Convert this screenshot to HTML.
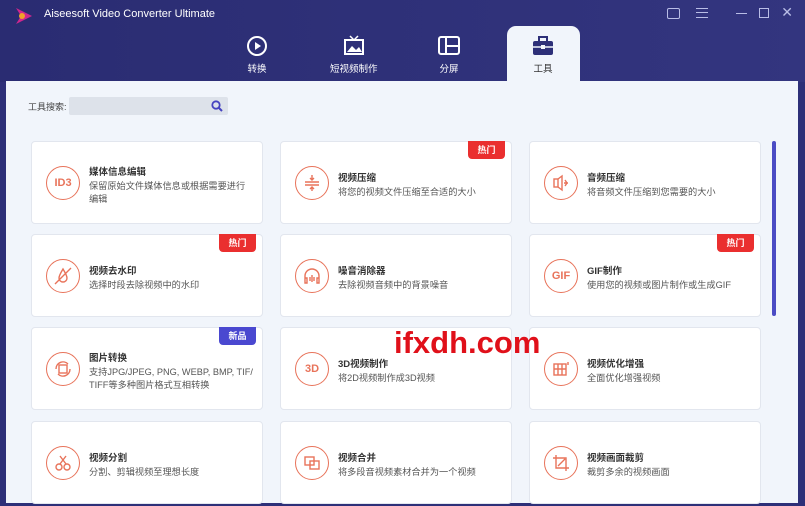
<!DOCTYPE html>
<html><head><meta charset="utf-8"><style>
*{margin:0;padding:0;box-sizing:border-box}
body{width:805px;height:506px;overflow:hidden;background:#2d2f78;font-family:"Liberation Sans","Noto Sans CJK SC",sans-serif;position:relative}
.hdr{position:absolute;left:0;top:0;width:805px;height:82px;background:linear-gradient(90deg,#2a2c72,#33357f)}
.title{position:absolute;left:44px;top:8px;color:#fff;font-size:11px}
.tab{position:absolute;top:35px;color:#fff;font-size:9.5px;text-align:center}
.content{position:absolute;left:6px;top:81px;width:792px;height:422px;background:#f1f5fb}
.active{position:absolute;left:507px;top:26px;width:73px;height:60px;background:#f1f5fb;border-radius:9px 9px 0 0}
.card{position:absolute;width:232px;height:83px;background:#fff;border:1px solid #e2e6ee;border-radius:4px}
.ic{position:absolute;left:14px;top:24px;width:34px;height:34px;border:1.6px solid #e8735a;border-radius:50%;color:#e8735a;font-size:11px;font-weight:bold;display:flex;align-items:center;justify-content:center}
.t{position:absolute;left:57px;font-size:9.5px;font-weight:bold;color:#333}
.d{position:absolute;left:57px;font-size:9.2px;color:#555;line-height:13px;width:172px;white-space:nowrap}
.badge{position:absolute;right:6px;top:-1px;width:37px;height:18px;background:#ea2f2f;color:#fff;font-size:9px;font-weight:bold;text-align:center;line-height:18px;border-radius:0 0 4px 4px}
.new{background:#4a48d0}
</style></head><body>
<div class="hdr"></div>
<svg style="position:absolute;left:13px;top:6px" width="22" height="20"><path d="M3 2 L19 10 L3 18 L8 10Z" fill="#d0268e"/><circle cx="9" cy="10" r="3" fill="#f2a12a"/></svg>
<div class="title">Aiseesoft Video Converter Ultimate</div>
<div style="position:absolute;right:125px;top:8px;width:13px;height:11px;border:1.3px solid #b9bde6;border-radius:2px"></div>
<div style="position:absolute;right:97px;top:8px;width:12px;height:10px;border-top:1.3px solid #b9bde6;border-bottom:1.3px solid #b9bde6"><div style="margin-top:3px;border-top:1.3px solid #b9bde6"></div></div>
<div style="position:absolute;right:58px;top:13px;width:11px;border-top:1.3px solid #b9bde6"></div>
<div style="position:absolute;right:36px;top:8px;width:10px;height:10px;border:1.3px solid #b9bde6"></div>
<div style="position:absolute;right:12px;top:4px;color:#b9bde6;font-size:14px">✕</div>
<div class="active"></div>
<div class="tab" style="left:246px"><svg width="22" height="22" style="display:block;margin:0 auto 4px"><circle cx="11" cy="11" r="9" fill="none" stroke="#fff" stroke-width="2"/><path d="M9 7 L15 11 L9 15Z" fill="#fff"/></svg>转换</div>
<div class="tab" style="left:330px"><svg width="22" height="22" style="display:block;margin:0 auto 4px"><rect x="2" y="5" width="18" height="14" fill="none" stroke="#fff" stroke-width="2"/><path d="M4 17 L9 11 L13 15 L16 12 L19 17Z" fill="#fff"/><path d="M7 1 L11 5 L15 1" stroke="#fff" fill="none" stroke-width="1.5"/></svg>短视频制作</div>
<div class="tab" style="left:438px"><svg width="22" height="22" style="display:block;margin:0 auto 4px"><rect x="1" y="2" width="20" height="17" rx="2" fill="none" stroke="#fff" stroke-width="2"/><path d="M8 2 V19 M8 11 H21" stroke="#fff" stroke-width="2"/></svg>分屏</div>
<div class="tab" style="left:532px;color:#333"><svg width="22" height="22" style="display:block;margin:0 auto 4px"><rect x="1" y="6" width="20" height="14" rx="2" fill="#2d2f78"/><rect x="7" y="2" width="8" height="5" fill="none" stroke="#2d2f78" stroke-width="2"/><path d="M1 12 H21" stroke="#f1f5fb" stroke-width="1.5"/><rect x="9" y="10" width="4" height="4" fill="#f1f5fb"/></svg>工具</div>
<div class="content"></div>
<div style="position:absolute;left:28px;top:100px;font-size:9px;color:#444">工具搜索:</div>
<div style="position:absolute;left:69px;top:97px;width:159px;height:18px;background:#dde2ea;border-radius:2px"><svg style="position:absolute;right:5px;top:3px" width="12" height="12"><circle cx="5" cy="5" r="3.7" fill="none" stroke="#4643c0" stroke-width="1.8"/><path d="M8 8 L11 11" stroke="#4643c0" stroke-width="2"/></svg></div>
<div style="position:absolute;left:772px;top:141px;width:4px;height:175px;background:#4b4cc4;border-radius:2px"></div>

<div class="card" style="left:31px;top:141px"><div class="ic">ID3</div><div class="t" style="top:22px">媒体信息编辑</div><div class="d" style="top:38px">保留原始文件媒体信息或根据需要进行<br>编辑</div></div>
<div class="card" style="left:280px;top:141px"><div class="badge">热门</div><div class="ic"><svg width="20" height="20"><path d="M3 9H17M3 12H17M10 2V7M8 5L10 7L12 5M10 18V14M8 16L10 14L12 16" stroke="#e8735a" fill="none" stroke-width="1.4"/></svg></div><div class="t" style="top:28px">视频压缩</div><div class="d" style="top:44px">将您的视频文件压缩至合适的大小</div></div>
<div class="card" style="left:529px;top:141px"><div class="ic"><svg width="20" height="20"><rect x="3" y="6" width="4" height="8" fill="none" stroke="#e8735a" stroke-width="1.4"/><path d="M7 6L11 3V17L7 14M13 10H17M14 7L16 10L14 13" stroke="#e8735a" fill="none" stroke-width="1.4"/></svg></div><div class="t" style="top:28px">音频压缩</div><div class="d" style="top:44px">将音频文件压缩到您需要的大小</div></div>

<div class="card" style="left:31px;top:234px"><div class="badge">热门</div><div class="ic"><svg width="22" height="22"><path d="M11 4C8 9 7 11 7 13A4 4 0 0 0 15 13C15 11 14 9 11 4Z M3 19L19 3" stroke="#e8735a" fill="none" stroke-width="1.4"/></svg></div><div class="t" style="top:28px">视频去水印</div><div class="d" style="top:44px">选择时段去除视频中的水印</div></div>
<div class="card" style="left:280px;top:234px"><div class="ic"><svg width="22" height="22"><path d="M4 14V11A7 7 0 0 1 18 11V14M4 13H6V18H4ZM16 13H18V18H16ZM9 12V16M11 10V17M13 12V16" stroke="#e8735a" fill="none" stroke-width="1.4"/></svg></div><div class="t" style="top:28px">噪音消除器</div><div class="d" style="top:44px">去除视频音频中的背景噪音</div></div>
<div class="card" style="left:529px;top:234px"><div class="badge">热门</div><div class="ic">GIF</div><div class="t" style="top:28px">GIF制作</div><div class="d" style="top:44px">使用您的视频或图片制作或生成GIF</div></div>

<div class="card" style="left:31px;top:327px"><div class="badge new">新品</div><div class="ic"><svg width="22" height="22"><rect x="7" y="7" width="8" height="8" fill="none" stroke="#e8735a" stroke-width="1.4"/><path d="M4 11A7 7 0 0 1 16 6M18 11A7 7 0 0 1 6 16" stroke="#e8735a" fill="none" stroke-width="1.4"/></svg></div><div class="t" style="top:22px">图片转换</div><div class="d" style="top:38px">支持JPG/JPEG, PNG, WEBP, BMP, TIF/<br>TIFF等多种图片格式互相转换</div></div>
<div class="card" style="left:280px;top:327px"><div class="ic">3D</div><div class="t" style="top:28px">3D视频制作</div><div class="d" style="top:44px">将2D视频制作成3D视频</div></div>
<div class="card" style="left:529px;top:327px"><div class="ic"><svg width="22" height="22"><rect x="4" y="6" width="12" height="11" fill="none" stroke="#e8735a" stroke-width="1.4"/><path d="M8 6V17M12 6V17M4 11H16M18 4V7" stroke="#e8735a" stroke-width="1.4"/></svg></div><div class="t" style="top:28px">视频优化增强</div><div class="d" style="top:44px">全面优化增强视频</div></div>

<div class="card" style="left:31px;top:421px"><div class="ic"><svg width="22" height="22"><circle cx="7" cy="15" r="3" fill="none" stroke="#e8735a" stroke-width="1.4"/><circle cx="15" cy="15" r="3" fill="none" stroke="#e8735a" stroke-width="1.4"/><path d="M8 12L14 4M14 12L8 4" stroke="#e8735a" stroke-width="1.4"/></svg></div><div class="t" style="top:28px">视频分割</div><div class="d" style="top:44px">分割、剪辑视频至理想长度</div></div>
<div class="card" style="left:280px;top:421px"><div class="ic"><svg width="22" height="22"><rect x="4" y="5" width="9" height="8" fill="none" stroke="#e8735a" stroke-width="1.4"/><rect x="9" y="9" width="9" height="8" fill="none" stroke="#e8735a" stroke-width="1.4"/></svg></div><div class="t" style="top:28px">视频合并</div><div class="d" style="top:44px">将多段音视频素材合并为一个视频</div></div>
<div class="card" style="left:529px;top:421px"><div class="ic"><svg width="22" height="22"><path d="M6 3V16H19M3 6H16V19M8 14L15 7" stroke="#e8735a" fill="none" stroke-width="1.4"/></svg></div><div class="t" style="top:28px">视频画面裁剪</div><div class="d" style="top:44px">裁剪多余的视频画面</div></div>

<div style="position:absolute;left:394px;top:325px;font-size:31px;font-weight:bold;color:#e0101a">ifxdh.com</div>
</body></html>
